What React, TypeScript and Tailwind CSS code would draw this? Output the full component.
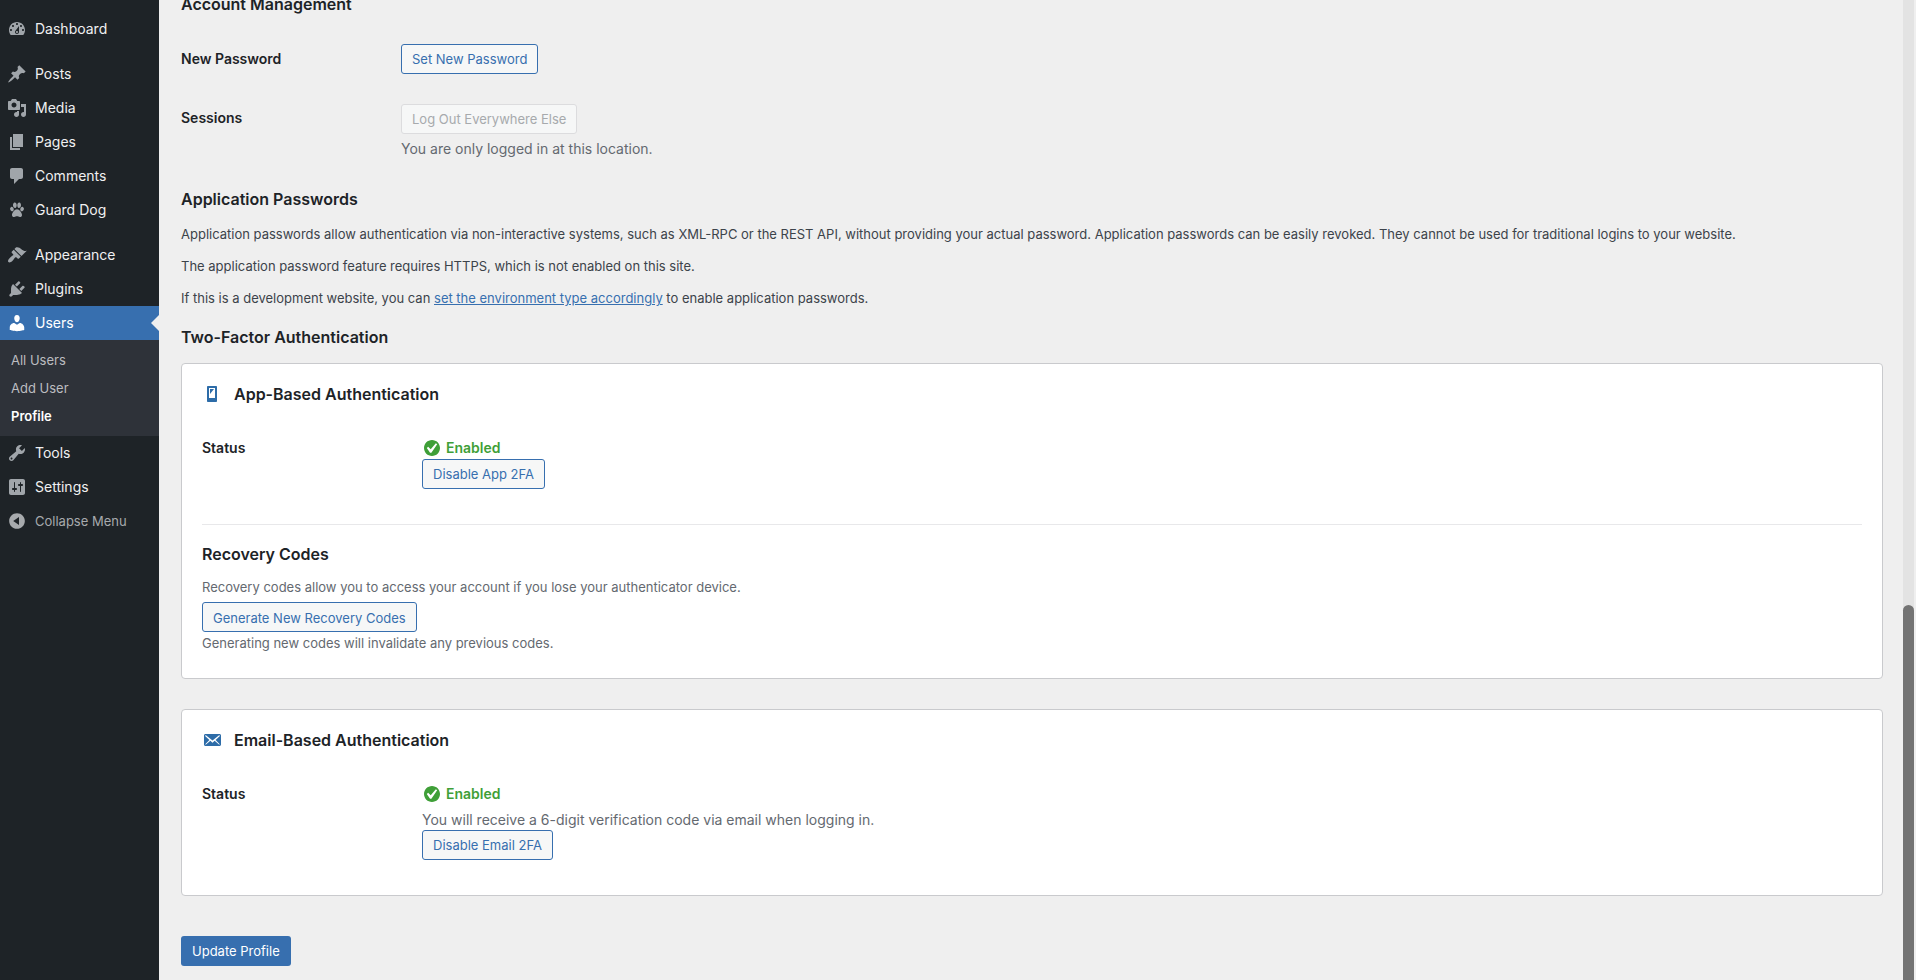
import { ReactNode } from 'react';
import clsx from 'clsx';

const icons = {
  dashboard:
    'M3.76 16h12.48c1.1-1.37 1.76-3.11 1.76-5 0-4.42-3.58-8-8-8s-8 3.58-8 8c0 1.89.66 3.63 1.76 5zM10 4c.55 0 1 .45 1 1s-.45 1-1 1-1-.45-1-1 .45-1 1-1zM6 6c.55 0 1 .45 1 1s-.45 1-1 1-1-.45-1-1 .45-1 1-1zm8 0c.55 0 1 .45 1 1s-.45 1-1 1-1-.45-1-1 .45-1 1-1zm-5.37 5.55L12 7v6c0 1.1-.9 2-2 2s-2-.9-2-2c0-.57.24-1.08.63-1.45zM4 10c.55 0 1 .45 1 1s-.45 1-1 1-1-.45-1-1 .45-1 1-1zm12 0c.55 0 1 .45 1 1s-.45 1-1 1-1-.45-1-1 .45-1 1-1zm-5 3c0-.55-.45-1-1-1s-1 .45-1 1 .45 1 1 1 1-.45 1-1z',
  post: 'M10.44 3.02l1.82-1.82 6.36 6.35-1.83 1.82c-1.05-.68-2.48-.57-3.41.36l-.75.75c-.92.93-1.04 2.35-.35 3.41l-1.83 1.82-2.41-2.41-2.8 2.79c-.42.42-3.38 2.71-3.8 2.29s1.86-3.39 2.28-3.81l2.79-2.79L4.1 9.36l1.83-1.82c1.05.69 2.48.57 3.4-.36l.75-.75c.93-.92 1.05-2.35.36-3.41z',
  media:
    'M13 11V4c0-.55-.45-1-1-1h-1.67L9 1H5L3.67 3H2c-.55 0-1 .45-1 1v7c0 .55.45 1 1 1h10c.55 0 1-.45 1-1zM7 4.5c1.38 0 2.5 1.12 2.5 2.5S8.38 9.5 7 9.5 4.5 8.38 4.5 7 5.62 4.5 7 4.5zM14 6h5v10.5c0 1.38-1.12 2.5-2.5 2.5S14 17.88 14 16.5s1.12-2.5 2.5-2.5c.17 0 .34.02.5.05V9h-3V6zm-4 8.05V13h2v3.5c0 1.38-1.12 2.5-2.5 2.5S7 17.88 7 16.5 8.12 14 9.5 14c.17 0 .34.02.5.05z',
  page: 'M6 15V2h10v13H6zm-1 1h8v2H3V5h2v11z',
  comments:
    'M5 2h9c1.1 0 2 .9 2 2v7c0 1.1-.9 2-2 2h-2l-5 5v-5H5c-1.1 0-2-.9-2-2V4c0-1.1.9-2 2-2z',
  pets: 'M7.6 2.6c1.1-.2 2 .9 2.1 2.4.1 1.5-.5 2.9-1.5 3-1.1.1-2.1-1.1-2.2-2.5-.1-1.5.6-2.8 1.6-2.9zM12.4 2.6c-1.1-.2-2 .9-2.1 2.4-.1 1.5.5 2.9 1.5 3 1.1.1 2.1-1.1 2.2-2.5.1-1.5-.6-2.8-1.6-2.9zM4.2 6.9c1-.3 2 .5 2.4 1.7.4 1.2 0 2.4-.9 2.7-1 .3-2.1-.5-2.5-1.7-.4-1.2.1-2.4 1-2.7zM15.8 6.9c-1-.3-2 .5-2.4 1.7-.4 1.2 0 2.4.9 2.7 1 .3 2.1-.5 2.5-1.7.4-1.2-.1-2.4-1-2.7zM10 9.3c2.3 0 5 3.5 5 5.7 0 1.5-1 2.1-2.2 2-1.1-.1-1.7-.7-2.8-.7s-1.7.6-2.8.7C6 17.1 5 16.5 5 15c0-2.2 2.7-5.7 5-5.7z',
  appearance:
    'M14.48 11.06L7.41 3.99l1.5-1.5c.5-.56 2.3-.47 3.51.32 1.21.8 1.43 1.28 2.91 2.1 1.18.64 2.45 1.26 4.45.85zm-.71.71L6.7 4.7 4.93 6.47c-.39.39-.39 1.02 0 1.41l1.06 1.06c.39.39.39 1.03 0 1.42-.6.6-1.43 1.11-2.21 1.69-.35.26-.7.53-1.01.84C1.43 14.23.4 16.08 1.4 17.07c.99 1 2.84-.03 4.18-1.36.31-.31.58-.66.85-1.02.57-.78 1.08-1.61 1.69-2.21.39-.39 1.02-.39 1.41 0l1.06 1.06c.39.39 1.02.39 1.41 0z',
  plugins:
    'M13.11 4.36L9.87 7.6 8 5.73l3.24-3.24c.35-.34 1.05-.2 1.56.32.52.51.66 1.21.31 1.55zm-8 1.77l.91-1.12 9.01 9.01-1.19.84c-.71.71-2.63 1.16-3.82 1.16H6.14L4.9 17.26c-.59.59-1.54.59-2.12 0-.59-.58-.59-1.53 0-2.12l1.24-1.24v-3.88c0-1.13.4-3.19 1.09-3.89zm7.26 3.97l3.24-3.24c.34-.35 1.04-.21 1.55.31.52.51.66 1.21.31 1.55l-3.24 3.25z',
  users:
    'M10 9.25c-2.27 0-2.73-3.44-2.73-3.44C7 4.02 7.82 2 9.97 2c2.16 0 2.98 2.02 2.71 3.81 0 0-.41 3.44-2.68 3.44zm0 2.57L12.72 10c2.39 0 4.52 2.33 4.52 4.53v2.49s-3.65 1.13-7.24 1.13c-3.65 0-7.24-1.13-7.24-1.13v-2.49c0-2.25 1.94-4.48 4.47-4.48z',
  tools:
    'M16.68 9.77c-1.34 1.34-3.3 1.67-4.95.99l-5.41 6.52c-.99.99-2.59.99-3.58 0s-.99-2.59 0-3.57l6.52-5.42c-.68-1.65-.35-3.61.99-4.95 1.28-1.28 3.12-1.62 4.72-1.06l-2.89 2.89 2.82 2.82 2.86-2.87c.53 1.58.18 3.39-1.08 4.65zM3.81 16.21c.4.39 1.04.39 1.43 0 .4-.4.4-1.04 0-1.43-.39-.4-1.03-.4-1.43 0-.39.39-.39 1.03 0 1.43z',
  settings:
    'M18 16V4c0-1.1-.9-2-2-2H4c-1.1 0-2 .9-2 2v12c0 1.1.9 2 2 2h12c1.1 0 2-.9 2-2zM8 11h1c.55 0 1 .45 1 1s-.45 1-1 1H8v1.5c0 .28-.22.5-.5.5s-.5-.22-.5-.5V13H6c-.55 0-1-.45-1-1s.45-1 1-1h1V5.5c0-.28.22-.5.5-.5s.5.22.5.5V11zm5-2h-1c-.55 0-1-.45-1-1s.45-1 1-1h1V5.5c0-.28.22-.5.5-.5s.5.22.5.5V7h1c.55 0 1 .45 1 1s-.45 1-1 1h-1v5.5c0 .28-.22.5-.5.5s-.5-.22-.5-.5V9z',
  collapse:
    'M10 2.16c4.33 0 7.84 3.51 7.84 7.84s-3.51 7.84-7.84 7.84S2.16 14.33 2.16 10 5.67 2.16 10 2.16zm2 11.72V6.12L6.18 9.97z',
  check:
    'M10 2c-4.42 0-8 3.58-8 8s3.58 8 8 8 8-3.58 8-8-3.58-8-8-8zm-.615 12.66h-1.34l-3.24-4.54 1.341-1.25 2.569 2.4 5.141-5.931 1.34.94-5.811 8.381z',
  smartphone:
    'M6 2h8c.55 0 1 .45 1 1v14c0 .55-.45 1-1 1H6c-.55 0-1-.45-1-1V3c0-.55.45-1 1-1zm7 12V4H7v10h6zM8 5h4l-4 5V5z',
  email:
    'M19 14.5v-9c0-.83-.67-1.5-1.5-1.5H3.49c-.83 0-1.5.67-1.5 1.5v9c0 .83.67 1.5 1.5 1.5H17.5c.83 0 1.5-.67 1.5-1.5zm-1.31-9.11c.33.33.15.67-.03.84L13.6 9.95l3.9 4.06c.12.14.2.36.06.51-.13.16-.43.15-.56.05l-4.37-3.73-2.14 1.95-2.13-1.95-4.37 3.73c-.13.1-.43.11-.56-.05-.14-.15-.06-.37.06-.51l3.9-4.06-4.06-3.72c-.18-.17-.36-.51-.03-.84s.67-.17.95.07l6.24 5.04 6.25-5.04c.28-.24.62-.4.95-.07z',
};

type IconName = keyof typeof icons;

const menuGroups: { label: string; icon: IconName }[][] = [
  [{ label: 'Dashboard', icon: 'dashboard' }],
  [
    { label: 'Posts', icon: 'post' },
    { label: 'Media', icon: 'media' },
    { label: 'Pages', icon: 'page' },
    { label: 'Comments', icon: 'comments' },
    { label: 'Guard Dog', icon: 'pets' },
  ],
  [
    { label: 'Appearance', icon: 'appearance' },
    { label: 'Plugins', icon: 'plugins' },
    { label: 'Users', icon: 'users' },
    { label: 'Tools', icon: 'tools' },
    { label: 'Settings', icon: 'settings' },
  ],
];

const userLinks = ['All Users', 'Add User', 'Profile'];

function Icon({ name, className }: { name: IconName; className?: string }) {
  return (
    <svg viewBox="0 0 20 20" className={clsx('size-5 shrink-0 fill-current', className)} aria-hidden="true">
      <path fillRule="evenodd" d={icons[name]} />
    </svg>
  );
}

function Sidebar() {
  return (
    <nav className="flex w-[159px] shrink-0 flex-col bg-[#1e2327] pt-3 text-sm text-[#f0f0f1]">
      {menuGroups.map((group, i) => (
        <ul key={i} className="mb-[11px] last-of-type:mb-0">
          {group.map((item) => {
            const active = item.label === 'Users';
            return (
              <li key={item.label}>
                <a
                  href="#"
                  className={clsx(
                    'relative flex h-[34px] items-center gap-2 pl-[7px]',
                    active && 'bg-[#376faf] text-white'
                  )}
                >
                  <Icon name={item.icon} className={active ? 'text-white' : 'text-[#a0a5aa]'} />
                  {item.label}
                  {active && (
                    <span className="absolute top-[9px] right-0 border-y-8 border-r-8 border-y-transparent border-r-[#efefef]" />
                  )}
                </a>
                {active && (
                  <ul className="bg-[#2e3239] py-1.5 text-[13px]">
                    {userLinks.map((link) => (
                      <li key={link}>
                        <a
                          href="#"
                          className={clsx(
                            'flex h-7 items-center pl-[11px]',
                            link === 'Profile' ? 'font-semibold text-white' : 'text-[#bcbdc0]'
                          )}
                        >
                          {link}
                        </a>
                      </li>
                    ))}
                  </ul>
                )}
              </li>
            );
          })}
        </ul>
      ))}
      <button type="button" className="flex h-[34px] items-center gap-2 pl-[7px] text-[13px] text-[#a7aaad]">
        <Icon name="collapse" />
        Collapse Menu
      </button>
    </nav>
  );
}

function Button({ children, disabled }: { children: ReactNode; disabled?: boolean }) {
  return (
    <button
      type="button"
      disabled={disabled}
      className={clsx(
        'block h-[30px] rounded-[3px] border bg-[#f6f7f7] px-2.5 pt-0.5 text-[13px]',
        disabled ? 'border-[#dcdcde] text-[#a7aaad]' : 'border-[#376faf] text-[#376faf]'
      )}
    >
      {children}
    </button>
  );
}

function FormRow({ label, className, children }: { label: string; className?: string; children: ReactNode }) {
  return (
    <div className={clsx('flex', className)}>
      <div className="w-[220px] shrink-0 text-sm font-semibold">{label}</div>
      <div className="min-w-0 flex-1">{children}</div>
    </div>
  );
}

function Enabled() {
  return (
    <div className="flex h-5 items-center gap-1 text-sm font-semibold text-[#3f9f38]">
      <Icon name="check" />
      Enabled
    </div>
  );
}

function Card({ icon, title, children }: { icon: IconName; title: string; children: ReactNode }) {
  return (
    <section className="rounded border border-[#c9cacd] bg-white px-5 pt-5">
      <h3 className="flex h-5 items-center gap-3 text-base font-semibold">
        <Icon name={icon} className="text-[#2d6ca8]" />
        {title}
      </h3>
      {children}
    </section>
  );
}

export default function App() {
  return (
    <div className="flex min-h-screen overflow-hidden bg-[#efefef] font-['Inter','Liberation_Sans',sans-serif] text-[#1d2327]">
      <Sidebar />

      <main className="min-w-0 flex-1 pr-5 pb-3 pl-[22px]">
        <h2 className="-mt-2 text-base leading-6 font-semibold">Account Management</h2>
        <FormRow label="New Password" className="mt-7 [&>div:first-child]:pt-[5px]">
          <Button>Set New Password</Button>
        </FormRow>
        <FormRow label="Sessions" className="mt-[30px] [&>div:first-child]:pt-1">
          <Button disabled>Log Out Everywhere Else</Button>
          <p className="mt-[5px] text-sm text-[#646970]">You are only logged in at this location.</p>
        </FormRow>

        <h2 className="mt-7 text-base leading-6 font-semibold">Application Passwords</h2>
        <div className="mt-[13px] space-y-3 text-[13px] leading-5 text-[#3c434a]">
          <p>
            Application passwords allow authentication via non-interactive systems, such as XML-RPC or the REST API,
            without providing your actual password. Application passwords can be easily revoked. They cannot be used
            for traditional logins to your website.
          </p>
          <p>The application password feature requires HTTPS, which is not enabled on this site.</p>
          <p>
            If this is a development website, you can{' '}
            <a href="#" className="text-[#376faf] underline">
              set the environment type accordingly
            </a>{' '}
            to enable application passwords.
          </p>
        </div>

        <h2 className="mt-[17px] text-base leading-6 font-semibold">Two-Factor Authentication</h2>
        <div className="mt-[14px] space-y-[30px]">
          <Card icon="smartphone" title="App-Based Authentication">
            <div className="mt-[34px] border-b border-[#e8e8ea] pb-[35px]">
              <FormRow label="Status">
                <Enabled />
                <div className="mt-px">
                  <Button>Disable App 2FA</Button>
                </div>
              </FormRow>
            </div>
            <h4 className="mt-[19px] text-base leading-5 font-semibold">Recovery Codes</h4>
            <div className="mt-[13px] pb-[25px] text-[13px] leading-5 text-[#646970]">
              <p className="mb-[5px]">
                Recovery codes allow you to access your account if you lose your authenticator device.
              </p>
              <Button>Generate New Recovery Codes</Button>
              <p className="mt-px">Generating new codes will invalidate any previous codes.</p>
            </div>
          </Card>

          <Card icon="email" title="Email-Based Authentication">
            <div className="mt-[34px] pb-[35px]">
              <FormRow label="Status">
                <Enabled />
                <p className="mt-[6px] text-sm text-[#646970]">
                  You will receive a 6-digit verification code via email when logging in.
                </p>
                <Button>Disable Email 2FA</Button>
              </FormRow>
            </div>
          </Card>
        </div>

        <button
          type="submit"
          className="mt-10 block h-[30px] rounded-[3px] bg-[#376faf] px-[11px] pt-0.5 text-[13px] text-white"
        >
          Update Profile
        </button>
      </main>

      {/* scroll track */}
      <div className="mr-0.5 flex w-[11px] shrink-0 flex-col bg-[#e3e3e3]">
        <div className="grow-[605]" />
        <div className="grow-[375] rounded-t-full bg-[#737373]" />
      </div>
    </div>
  );
}
